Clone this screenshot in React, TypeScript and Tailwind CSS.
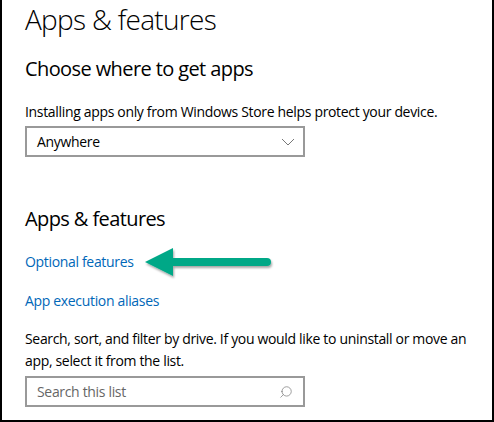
import { Search } from 'lucide-react';

function Arrow() {
  return (
    <svg width="140" height="34" viewBox="0 0 140 34" className="absolute left-[138px] top-[246px]">
      <defs>
        <filter id="sh" x="-10%" y="-30%" width="120%" height="160%">
          <feDropShadow dx="1" dy="2" stdDeviation="1.2" floodColor="#000" floodOpacity="0.35" />
        </filter>
      </defs>
      <g filter="url(#sh)" fill="#00a887">
        <path d="M5 16 L33 2 L33 30 Z" />
        <rect x="28" y="12" width="103" height="8" rx="4" />
      </g>
    </svg>
  );
}

export default function App() {
  return (
    <div
      className="relative w-[494px] h-[422px] bg-white border-x-2 border-b-2 border-black text-black overflow-hidden"
      style={{ fontFamily: '"Open Sans", "Noto Sans", sans-serif' }}
    >
      <div className="pl-[23px] flex flex-col">
        <h1 className="text-[28px] font-light leading-[36px] mt-[1px] tracking-[-0.7px]">Apps &amp; features</h1>
        <h2 className="text-[20px] leading-[28px] mt-[18px] tracking-[-0.6px]">Choose where to get apps</h2>
        <p className="text-[14px] leading-[20px] mt-[19px] tracking-[-0.33px]">
          Installing apps only from Windows Store helps protect your device.
        </p>
        <div className="mt-[4px] w-[280px] h-[31px] border-2 border-[#999999] flex items-center justify-between pl-[10px] pr-[8px]">
          <span className="text-[14px] tracking-[-0.33px]">Anywhere</span>
          <svg width="14" height="8" viewBox="0 0 14 8" fill="none" stroke="#777" strokeWidth="1">
            <path d="M1 1 L7 7 L13 1" />
          </svg>
        </div>
        <h2 className="text-[20px] leading-[28px] mt-[48px] tracking-[-0.6px]">Apps &amp; features</h2>
        <a className="text-[14px] leading-[20px] text-[#0067b8] mt-[19px] tracking-[-0.33px]">Optional features</a>
        <a className="text-[14px] leading-[20px] text-[#0067b8] mt-[19px] tracking-[-0.33px]">App execution aliases</a>
        <p className="text-[14px] leading-[22px] mt-[17px] w-[455px] tracking-[-0.33px]">
          Search, sort, and filter by drive. If you would like to uninstall or move an app, select it from the list.
        </p>
        <div className="mt-[4px] w-[280px] h-[31px] border-2 border-[#999999] flex items-center justify-between pl-[10px] pr-[10px]">
          <span className="text-[14px] text-[#666666] tracking-[-0.33px]">Search this list</span>
          <Search size={14} strokeWidth={1.2} className="text-[#777] -scale-x-100" />
        </div>
      </div>
      <Arrow />
    </div>
  );
}
